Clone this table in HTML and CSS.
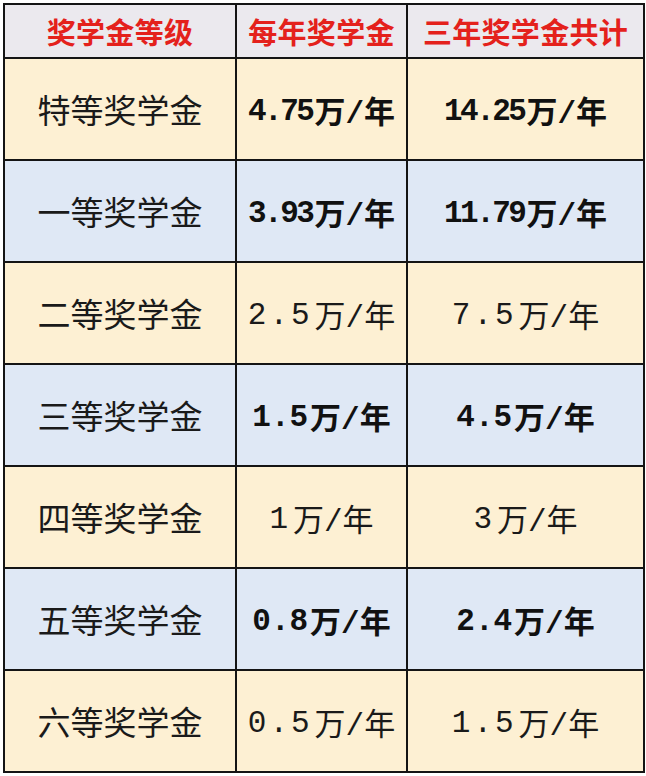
FILE: index.html
```html
<!DOCTYPE html>
<html lang="zh-CN">
<head>
<meta charset="utf-8">
<title>奖学金等级</title>
<link rel="stylesheet" href="styles.css">
</head>
<body>
<div class="sheet">
  <div class="cell head">奖学金等级</div>
  <div class="cell head">每年奖学金</div>
  <div class="cell head">三年奖学金共计</div>

  <div class="cell name yellow">特等奖学金</div>
  <div class="cell val yellow bold"><span class="n">4.75</span>万/年</div>
  <div class="cell val yellow bold"><span class="n">14.25</span>万/年</div>

  <div class="cell name blue">一等奖学金</div>
  <div class="cell val blue bold"><span class="n">3.93</span>万/年</div>
  <div class="cell val blue bold"><span class="n">11.79</span>万/年</div>

  <div class="cell name yellow">二等奖学金</div>
  <div class="cell val yellow"><span class="n wide">2.5</span>万/年</div>
  <div class="cell val yellow"><span class="n wide">7.5</span>万/年</div>

  <div class="cell name blue">三等奖学金</div>
  <div class="cell val blue bold"><span class="n mid">1.5</span>万/年</div>
  <div class="cell val blue bold"><span class="n mid">4.5</span>万/年</div>

  <div class="cell name yellow">四等奖学金</div>
  <div class="cell val yellow"><span class="n wide">1</span>万/年</div>
  <div class="cell val yellow"><span class="n wide">3</span>万/年</div>

  <div class="cell name blue">五等奖学金</div>
  <div class="cell val blue bold"><span class="n mid">0.8</span>万/年</div>
  <div class="cell val blue bold"><span class="n mid">2.4</span>万/年</div>

  <div class="cell name yellow">六等奖学金</div>
  <div class="cell val yellow"><span class="n wide">0.5</span>万/年</div>
  <div class="cell val yellow"><span class="n wide">1.5</span>万/年</div>
</div>
</body>
</html>
```
FILE: styles.css
```css
html, body {
  margin: 0;
  padding: 0;
  background: #ffffff;
}

body {
  font-family: "Noto Sans CJK SC", sans-serif;
  color: #141414;
}

.sheet {
  display: grid;
  grid-template-columns: 230px 169px 235px;
  grid-template-rows: 52px repeat(7, 100px);
  gap: 2px;
  padding: 2px;
  background: #141414;
  width: max-content;
  margin: 3px 0 0 3px;
}

.cell {
  display: flex;
  align-items: center;
  justify-content: center;
  white-space: nowrap;
}

.head {
  background: #ebe9ee;
  color: #e4211c;
  font-weight: 700;
  font-size: 29px;
  letter-spacing: 0.3px;
}

.yellow {
  background: #fdf0d3;
}

.blue {
  background: #dfe8f5;
}

.name {
  font-size: 33px;
  font-weight: 400;
  color: #1a1a1a;
}

.val {
  font-family: "Liberation Mono", "Noto Sans CJK SC", monospace;
  font-size: 31px;
  font-weight: 400;
  color: #1a1a1a;
}

.val.bold {
  font-weight: 700;
  color: #111111;
}

.n {
  font-size: 31px;
  letter-spacing: -2.5px;
  margin-right: 2px;
  margin-top: 5px;
}

.n.mid {
  letter-spacing: 0;
}

.n.wide {
  letter-spacing: 3px;
}
```
